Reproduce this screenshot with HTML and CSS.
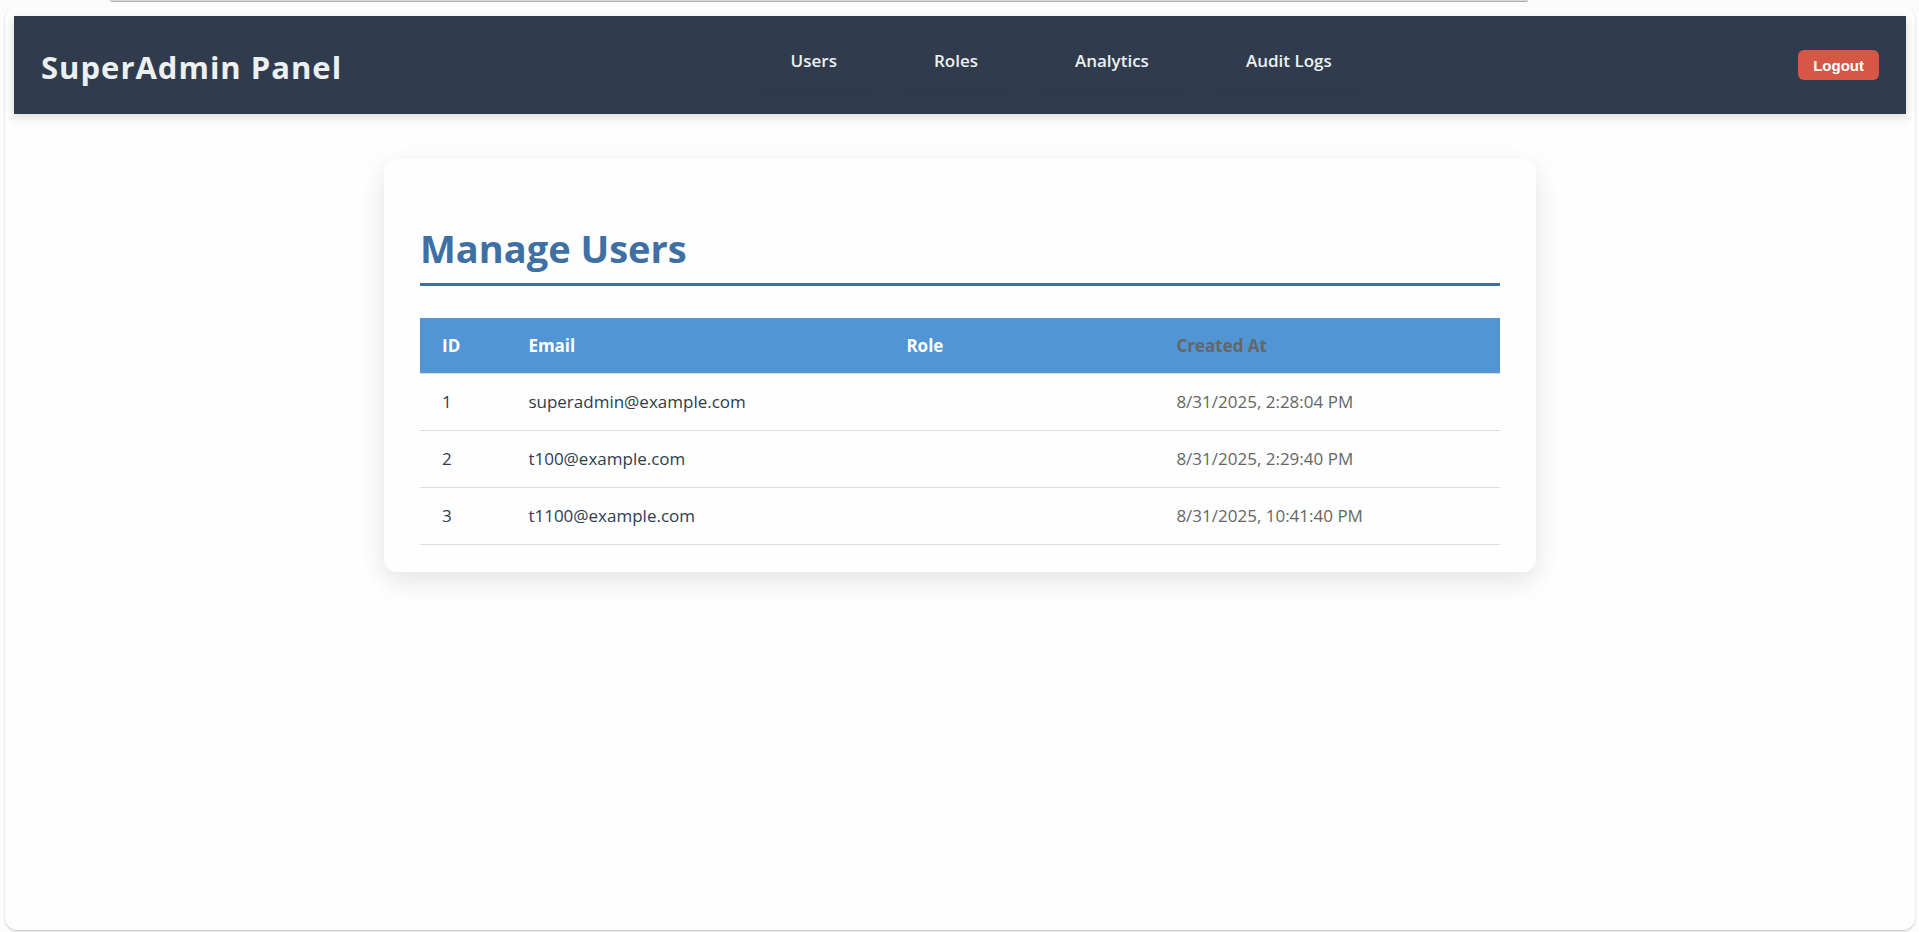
FILE: index.html
```html
<!DOCTYPE html>
<html lang="en">
<head>
<meta charset="utf-8">
<title>SuperAdmin Panel</title>
<link rel="stylesheet" href="styles.css">
</head>
<body>
<div class="top-edge"></div>
<div class="frame">
  <header class="header">
    <div class="brand">SuperAdmin Panel</div>
    <nav class="nav">
      <a class="nav-link" href="#users">Users</a>
      <a class="nav-link" href="#roles">Roles</a>
      <a class="nav-link" href="#analytics">Analytics</a>
      <a class="nav-link" href="#audit">Audit Logs</a>
    </nav>
    <button class="logout" type="button">Logout</button>
  </header>
  <main class="card">
    <h1 class="title">Manage Users</h1>
    <table class="users">
      <thead>
        <tr><th class="col-id">ID</th><th class="col-email">Email</th><th class="col-role">Role</th><th class="created">Created At</th></tr>
      </thead>
      <tbody>
        <tr><td>1</td><td>superadmin@example.com</td><td></td><td class="created">8/31/2025, 2:28:04 PM</td></tr>
        <tr><td>2</td><td>t100@example.com</td><td></td><td class="created">8/31/2025, 2:29:40 PM</td></tr>
        <tr><td>3</td><td>t1100@example.com</td><td></td><td class="created">8/31/2025, 10:41:40 PM</td></tr>
      </tbody>
    </table>
  </main>
</div>
</body>
</html>
```
FILE: styles.css
```css
* {
  box-sizing: border-box;
}

body {
  margin: 0;
  min-height: 100vh;
  display: flex;
  flex-direction: column;
  background: #fcfcfc;
  color: #2f3c4e;
  font-family: "Segoe UI", "Open Sans", "Noto Sans", sans-serif;
  font-size: 17px;
  line-height: 24px;
}

.top-edge {
  height: 2px;
  margin: 0 391px 5px 110px;
  background: #dadada;
  border-bottom: 1px solid #b0b0b0;
  border-radius: 0 0 8px 8px;
}

.frame {
  flex: 1;
  margin: 0 4px 2px 5px;
  padding: 9px 9px 24px;
  background: #fefefe;
  border-radius: 12px;
  box-shadow: 0 1px 2px rgba(0, 0, 0, 0.24);
}

.header {
  display: flex;
  align-items: center;
  justify-content: space-between;
  min-height: 98px;
  padding: 0 27px;
  background: #303c4e;
  box-shadow: 0 3px 11px rgba(0, 0, 0, 0.15);
}

.brand {
  padding-top: 4px;
  color: #ecf0f1;
  font-size: 31px;
  font-weight: 700;
  line-height: 40px;
  letter-spacing: 1px;
}

.nav {
  display: flex;
  gap: 25px;
  margin: 0 18px 9px 0;
}

.nav-link {
  padding: 15px 36px;
  border-radius: 9px;
  color: #ecf0f1;
  font-weight: 600;
  text-decoration: none;
  box-shadow: 0 3px 6px rgba(0, 0, 0, 0.04);
}

.logout {
  height: 30px;
  padding: 0 15px;
  border: 0;
  border-radius: 6px;
  background: #d65745;
  color: #fff;
  font: 700 15px "Liberation Sans", Arial, sans-serif;
}

.card {
  width: 1152px;
  max-width: 100%;
  margin: 45px auto 0;
  padding: 63px 36px 27px;
  background: #fefefe;
  border-radius: 13px;
  box-shadow: 0 9px 27px rgba(0, 0, 0, 0.11);
}

.title {
  margin: 0 0 32px;
  padding-bottom: 9px;
  border-bottom: 3px solid #3f70a4;
  color: #3f70a4;
  font-size: 38px;
  font-weight: 700;
  line-height: 52px;
}

.users {
  width: 100%;
  table-layout: fixed;
  border-collapse: separate;
  border-spacing: 0;
  text-align: left;
}

.users th,
.users td {
  padding: 16px 22px;
  border-bottom: 1px solid #d9dbdc;
}

.users th {
  padding-bottom: 15px;
  background: #5195d5;
  background-clip: padding-box;
  color: #fff;
  font-weight: 700;
}

.users .created {
  color: #666;
}

.col-id {
  width: 8%;
}

.col-email {
  width: 35%;
}

.col-role {
  width: 25%;
}
```
